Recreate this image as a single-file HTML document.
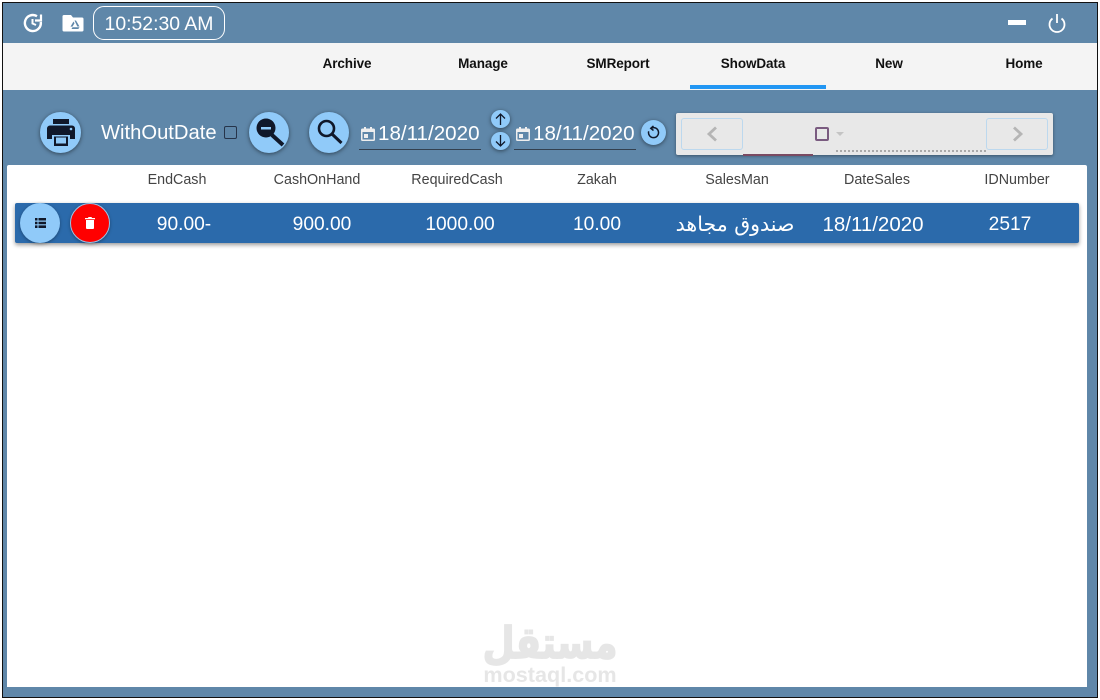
<!DOCTYPE html>
<html><head><meta charset="utf-8"><style>
*{box-sizing:border-box}
html,body{margin:0;padding:0;width:1100px;height:700px;overflow:hidden;background:#fff;font-family:"Liberation Sans","Noto Sans CJK SC",sans-serif}
.a{position:absolute;white-space:nowrap}
#f{position:absolute;left:2px;top:2px;width:1096px;height:696px;background:#5f87a9;border:1px solid #111}
.c{transform:translateX(-50%)}
.nav{top:56px;font-size:13.5px;font-weight:bold;color:#111;transform:translateX(-50%);letter-spacing:-.1px}
.th{top:172px;font-size:14.3px;color:#444;transform:translateX(-50%)}
.td{top:214px;font-size:19.2px;color:#fff;transform:translateX(-50%)}
.r{border-radius:50%;background:#90caf9;box-shadow:0 1px 4px rgba(0,0,0,.5)}
.date{top:122px;font-size:20.6px;color:#fff}
svg{position:absolute;display:block}
</style></head><body>
<div id="f"></div>
<div class="a" style="left:3px;top:43px;width:1094px;height:47px;background:#f4f4f4"></div>
<svg style="left:22px;top:12px" width="22" height="22" viewBox="0 0 22 22" fill="none" stroke="#fff" stroke-width="2.400"><path d="M18.800 10A8 8 0 1 1 15 4.200"/><path d="M19 2.500v6h-6" stroke-width="2.200"/><path d="M10.500 7v4.500l3.500 1.500" stroke-width="2"/></svg>
<svg style="left:62px;top:14px" width="22" height="19" viewBox="0 0 22 19"><path fill="#fff" d="M2 1h7l2 2.500h9a1.500 1.500 0 0 1 1.500 1.500v11a1.500 1.500 0 0 1-1.500 1.500H2a1.500 1.500 0 0 1-1.500-1.500V2.500A1.500 1.500 0 0 1 2 1z"/><path fill="#5f87a9" d="M12.500 6.500h1.500l3.500 6h-2.200zM11.500 7.500l1 1.800-2 3.300H8.500zM10.500 13.300h7l-1.200 1.700H9.500z"/></svg>
<div class="a" style="left:93px;top:6px;width:132px;height:34px;border:1px solid #fff;border-radius:11px;color:#fff;font-size:19.4px;line-height:35px;text-align:center">10:52:30 AM</div>
<div class="a" style="left:1008px;top:20px;width:18px;height:5px;background:#fff"></div>
<svg style="left:1047px;top:13px" width="20" height="20" viewBox="0 0 20 20" fill="none" stroke="#fff" stroke-width="1.800"><path d="M5.500 5.500a7.500 7.500 0 1 0 9 0"/><path d="M10 1v9"/></svg>

<div class="a nav" style="left:347px">Archive</div>
<div class="a nav" style="left:483px">Manage</div>
<div class="a nav" style="left:618px">SMReport</div>
<div class="a nav" style="left:753px">ShowData</div>
<div class="a nav" style="left:889px">New</div>
<div class="a nav" style="left:1024px">Home</div>
<div class="a" style="left:690px;top:85px;width:136px;height:4px;background:#2196f3"></div>

<div class="a r" style="left:40px;top:112px;width:41px;height:41px"></div>
<svg style="left:46px;top:118px" width="30" height="30" viewBox="0 0 30 30"><path fill="#10182a" d="M7 1h16v5H7zM4 7.500h22a3 3 0 0 1 3 3V21h-5v-4H6v4H1V10.500a3 3 0 0 1 3-3zM8 18.500h14V28H8z"/><path fill="#90caf9" d="M10 19.500h10v6H10z"/><circle cx="25" cy="11" r="1.300" fill="#90caf9"/></svg>
<div class="a" style="left:101px;top:122px;font-size:20.2px;color:#fff">WithOutDate</div>
<div class="a" style="left:224px;top:126px;width:13px;height:13px;border:1.500px solid #26344a;border-radius:2px"></div>
<div class="a r" style="left:249px;top:112px;width:40px;height:41px"></div>
<svg style="left:253px;top:116px" width="34" height="34" viewBox="0 0 34 34"><circle cx="13" cy="12" r="9.500" fill="#10182a"/><path d="M19 19l11 10" stroke="#10182a" stroke-width="4"/><path d="M8 11h10v2.500H8z" fill="#90caf9"/></svg>
<div class="a r" style="left:309px;top:112px;width:40px;height:41px"></div>
<svg style="left:314px;top:117px" width="32" height="32" viewBox="0 0 32 32" fill="none" stroke="#10182a"><circle cx="12.500" cy="11.500" r="7.500" stroke-width="2.600"/><path d="M18 17l9.500 9" stroke-width="3"/></svg>

<svg style="left:361px;top:127px" width="14" height="14" viewBox="0 0 14 14"><path fill="#eee" d="M3 0h2v1.500h4V0h2v1.500h1.500A1.500 1.500 0 0 1 14 3v9.500a1.500 1.500 0 0 1-1.500 1.500h-11A1.500 1.500 0 0 1 0 12.500V3a1.500 1.500 0 0 1 1.500-1.500H3zM1.500 5v7.500h11V5z"/><path fill="#eee" d="M3 7h4v4H3z"/></svg>
<div class="a date" style="left:378px">18/11/2020</div>
<div class="a" style="left:359px;top:149px;width:122px;height:1px;background:#33404f"></div>
<div class="a r" style="left:491px;top:110px;width:19px;height:18px"></div>
<svg style="left:492px;top:110px" width="17" height="18" viewBox="0 0 17 18" fill="none" stroke="#10182a" stroke-width="1.300"><path d="M8.500 15V4M4 8.500L8.500 4 13 8.500"/></svg>
<div class="a r" style="left:491px;top:132px;width:19px;height:18px"></div>
<svg style="left:492px;top:132px" width="17" height="18" viewBox="0 0 17 18" fill="none" stroke="#10182a" stroke-width="1.300"><path d="M8.500 3v11M4 9.500L8.500 14 13 9.500"/></svg>
<svg style="left:516px;top:127px" width="14" height="14" viewBox="0 0 14 14"><path fill="#eee" d="M3 0h2v1.500h4V0h2v1.500h1.500A1.500 1.500 0 0 1 14 3v9.500a1.500 1.500 0 0 1-1.500 1.500h-11A1.500 1.500 0 0 1 0 12.500V3a1.500 1.500 0 0 1 1.500-1.500H3zM1.500 5v7.500h11V5z"/><path fill="#eee" d="M3 7h4v4H3z"/></svg>
<div class="a date" style="left:533px">18/11/2020</div>
<div class="a" style="left:514px;top:149px;width:122px;height:1px;background:#33404f"></div>
<div class="a r" style="left:641px;top:120px;width:25px;height:25px"></div>
<svg style="left:646px;top:125px" width="15" height="15" viewBox="0 0 15 15" fill="none" stroke="#10182a" stroke-width="1.500"><path d="M5 3.300a5 5 0 1 1-2.300 3"/><path d="M7.500 1L4.800 3.300l2.700 2.200"/></svg>

<div class="a" style="left:676px;top:113px;width:377px;height:42px;background:#e8e8e8;border-radius:2px;box-shadow:0 1px 3px rgba(0,0,0,.4)"></div>
<div class="a" style="left:681px;top:118px;width:62px;height:32px;border:1px solid #bcd8ee;border-radius:3px"></div>
<div class="a" style="left:986px;top:118px;width:62px;height:32px;border:1px solid #bcd8ee;border-radius:3px"></div>
<svg style="left:705px;top:126px" width="14" height="16" viewBox="0 0 14 16" fill="none" stroke="#b5b5b5" stroke-width="2.800"><path d="M11 1.500L4 8l7 6.500"/></svg>
<svg style="left:1011px;top:126px" width="14" height="16" viewBox="0 0 14 16" fill="none" stroke="#b5b5b5" stroke-width="2.800"><path d="M3 1.500L10 8l-7 6.500"/></svg>
<div class="a" style="left:815px;top:127px;width:14px;height:14px;border:2px solid #7a5b80;border-radius:2px"></div>
<div class="a" style="left:836px;top:132px;width:0;height:0;border-left:4px solid transparent;border-right:4px solid transparent;border-top:4px solid #c4c4c4"></div>
<div class="a" style="left:743px;top:154px;width:70px;height:2px;background:#7a4a62"></div>
<div class="a" style="left:836px;top:150px;width:150px;height:2px;border-top:2px dotted #aaa"></div>

<div class="a" style="left:7px;top:165px;width:1080px;height:522px;background:#fff;border-radius:2px 2px 0 0"></div>
<div class="a th" style="left:177px">EndCash</div>
<div class="a th" style="left:317px">CashOnHand</div>
<div class="a th" style="left:457px">RequiredCash</div>
<div class="a th" style="left:597px">Zakah</div>
<div class="a th" style="left:737px">SalesMan</div>
<div class="a th" style="left:877px">DateSales</div>
<div class="a th" style="left:1017px">IDNumber</div>

<div class="a" style="left:15px;top:203px;width:1064px;height:40px;background:#2b6aab;border-radius:2px;box-shadow:0 2px 4px rgba(0,0,0,.4)"></div>
<div class="a" style="left:20px;top:203px;width:40px;height:40px;border-radius:50%;background:#90caf9;box-shadow:0 1px 3px rgba(0,0,0,.35)"></div>
<svg style="left:35px;top:218px" width="11" height="10" viewBox="0 0 11 10" fill="#10182a"><path d="M0 0h2.500v2.500H0zM3.500 0H11v2.500H3.500zM0 3.700h2.500v2.500H0zM3.500 3.700H11v2.500H3.500zM0 7.400h2.500V10H0zM3.500 7.400H11V10H3.500z"/></svg>
<div class="a" style="left:70px;top:203px;width:40px;height:40px;border-radius:50%;background:#f00;border:1px solid #9fc2e2;box-shadow:0 1px 3px rgba(0,0,0,.35)"></div>
<svg style="left:85px;top:217px" width="10" height="12" viewBox="0 0 10 12" fill="#fff"><path d="M3.500 0h3l.5 1h3v1.300H0V1h3zM1 3h8v8a1 1 0 0 1-1 1H2a1 1 0 0 1-1-1z"/></svg>
<div class="a td" style="left:184px">90.00-</div>
<div class="a td" style="left:322px">900.00</div>
<div class="a td" style="left:460px">1000.00</div>
<div class="a td" style="left:597px">10.00</div>
<div class="a td" style="left:735px;top:212px;direction:rtl;font-family:'DejaVu Sans',sans-serif;font-size:20.500px">صندوق مجاهد</div>
<div class="a td" style="left:873px;font-size:20.500px;top:213px">18/11/2020</div>
<div class="a td" style="left:1010px">2517</div>

<div class="a" style="left:550px;top:620px;font-family:'DejaVu Sans',sans-serif;font-weight:bold;font-size:38px;line-height:46px;color:#e6e6e6;direction:rtl;-webkit-text-stroke:1.500px #e6e6e6;transform:translateX(-50%) scale(.97,1.150)">مستقل</div>
<div class="a c" style="left:550px;top:663px;font-weight:bold;font-size:21.600px;line-height:24px;color:#e6e6e6">mostaql.com</div>
</body></html>
